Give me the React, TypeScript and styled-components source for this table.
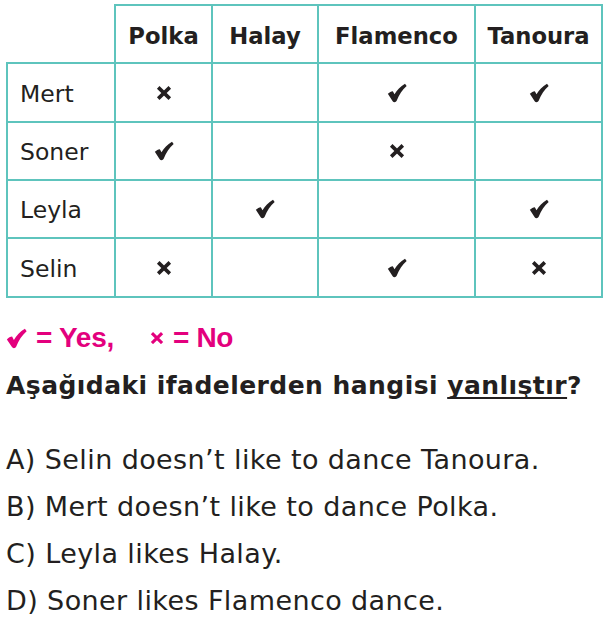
import React from "react";
import styled, { createGlobalStyle } from "styled-components";

const GlobalStyle = createGlobalStyle`
  html, body { margin: 0; padding: 0; background: #ffffff; }
  body { font-family: "DejaVu Sans", "Liberation Sans", sans-serif; color: #231f20; }
`;

const TEAL = "#5ec4bd";
const INK = "#231f20";
const PINK = "#e3007d";

const Page = styled.div`
  width: 607px;
  height: 626px;
  box-sizing: border-box;
  padding: 4px 0 0 6px;
  overflow: hidden;
`;

const Grid = styled.div`
  display: grid;
  grid-template-columns: 110px 97px 106px 157px 127px;
  grid-template-rows: 60px 59px 58px 58px 59px;
`;

type CellProps = { $top?: boolean; $left?: boolean };

const Cell = styled.div<CellProps>`
  box-sizing: border-box;
  display: flex;
  align-items: center;
  justify-content: center;
  border-right: 2px solid ${TEAL};
  border-bottom: 2px solid ${TEAL};
  border-top: ${(p) => (p.$top ? `2px solid ${TEAL}` : "none")};
  border-left: ${(p) => (p.$left ? `2px solid ${TEAL}` : "none")};
`;

const HeadCell = styled(Cell)`
  font-family: "DejaVu Sans", "Liberation Sans", sans-serif;
  font-weight: 700;
  font-size: 22.7px;
  color: ${INK};
  padding-top: 4px;
`;

const NameCell = styled(Cell)`
  justify-content: flex-start;
  padding-left: 12px;
  padding-top: 2px;
  font-family: "DejaVu Sans", "Liberation Sans", sans-serif;
  font-weight: 400;
  font-size: 23.5px;
  color: ${INK};
`;

const MarkCell = styled(Cell)`
  color: ${INK};
`;

const Legend = styled.div`
  display: flex;
  align-items: center;
  gap: 36px;
  margin-top: 24px;
  font-family: "Liberation Sans", Arial, sans-serif;
  font-weight: 700;
  font-size: 28px;
  color: ${PINK};
  letter-spacing: -0.3px;
  line-height: 32px;
`;

const LegendItem = styled.span`
  display: inline-flex;
  align-items: center;
  gap: 9px;
`;

const Question = styled.div`
  margin-top: 17px;
  font-family: "DejaVu Sans", "Liberation Sans", sans-serif;
  font-weight: 700;
  font-size: 25px;
  letter-spacing: 0.45px;
  line-height: 30px;
  color: ${INK};
`;

const Under = styled.span`
  text-decoration: underline;
  text-decoration-thickness: 2px;
  text-underline-offset: 3px;
  text-decoration-skip-ink: none;
`;

const Options = styled.div`
  margin-top: 43px;
  display: flex;
  flex-direction: column;
  gap: 15px;
`;

const Option = styled.div`
  font-family: "DejaVu Sans", "Liberation Sans", sans-serif;
  font-weight: 400;
  font-size: 27px;
  letter-spacing: 0.4px;
  line-height: 32px;
  color: ${INK};
`;

const Check = ({ size = 20, color = INK }: { size?: number; color?: string }) => (
  <svg width={size} height={size} viewBox="0 0 24 24" aria-hidden="true">
    <path
      fill={color}
      d="M1 13 C2.8 11.2 5 10 7 9.8 L9 13.6 C12 8.4 16 4 21.6 0.8 L23.6 3.6 C18.4 8 14.4 14 11.6 21.4 C10.8 23.4 7.8 23.6 6.8 21.8 Z"
    />
  </svg>
);

const Cross = ({ size = 16, color = INK }: { size?: number; color?: string }) => (
  <svg width={size} height={(size * 14) / 16} viewBox="0 0 16 14" aria-hidden="true">
    <path d="M2.2 1.4 L13.8 12.6 M13.8 1.4 L2.2 12.6" stroke={color} strokeWidth={3.6} strokeLinecap="butt" />
  </svg>
);

type Mark = "y" | "n" | "";

const dances = ["Polka", "Halay", "Flamenco", "Tanoura"];
const rows: { name: string; marks: Mark[] }[] = [
  { name: "Mert", marks: ["n", "", "y", "y"] },
  { name: "Soner", marks: ["y", "", "n", ""] },
  { name: "Leyla", marks: ["", "y", "", "y"] },
  { name: "Selin", marks: ["n", "", "y", "n"] },
];

const options = [
  "A) Selin doesn\u2019t like to dance Tanoura.",
  "B) Mert doesn\u2019t like to dance Polka.",
  "C) Leyla likes Halay.",
  "D) Soner likes Flamenco dance.",
];

export default function App() {
  return (
    <>
      <GlobalStyle />
      <Page>
        <Grid>
          <Cell />
          {dances.map((d) => (
            <HeadCell key={d} $top>
              {d}
            </HeadCell>
          ))}
          {rows.map((r) => (
            <React.Fragment key={r.name}>
              <NameCell $left>{r.name}</NameCell>
              {r.marks.map((m, i) => (
                <MarkCell key={i}>
                  {m === "y" ? <Check /> : m === "n" ? <Cross /> : null}
                </MarkCell>
              ))}
            </React.Fragment>
          ))}
        </Grid>
        <Legend>
          <LegendItem>
            <Check size={21} color={PINK} />
            <span>= Yes,</span>
          </LegendItem>
          <LegendItem>
            <Cross size={14} color={PINK} />
            <span>= No</span>
          </LegendItem>
        </Legend>
        <Question>
          Aşağıdaki ifadelerden hangisi <Under>yanlıştır</Under>?
        </Question>
        <Options>
          {options.map((o) => (
            <Option key={o}>{o}</Option>
          ))}
        </Options>
      </Page>
    </>
  );
}
